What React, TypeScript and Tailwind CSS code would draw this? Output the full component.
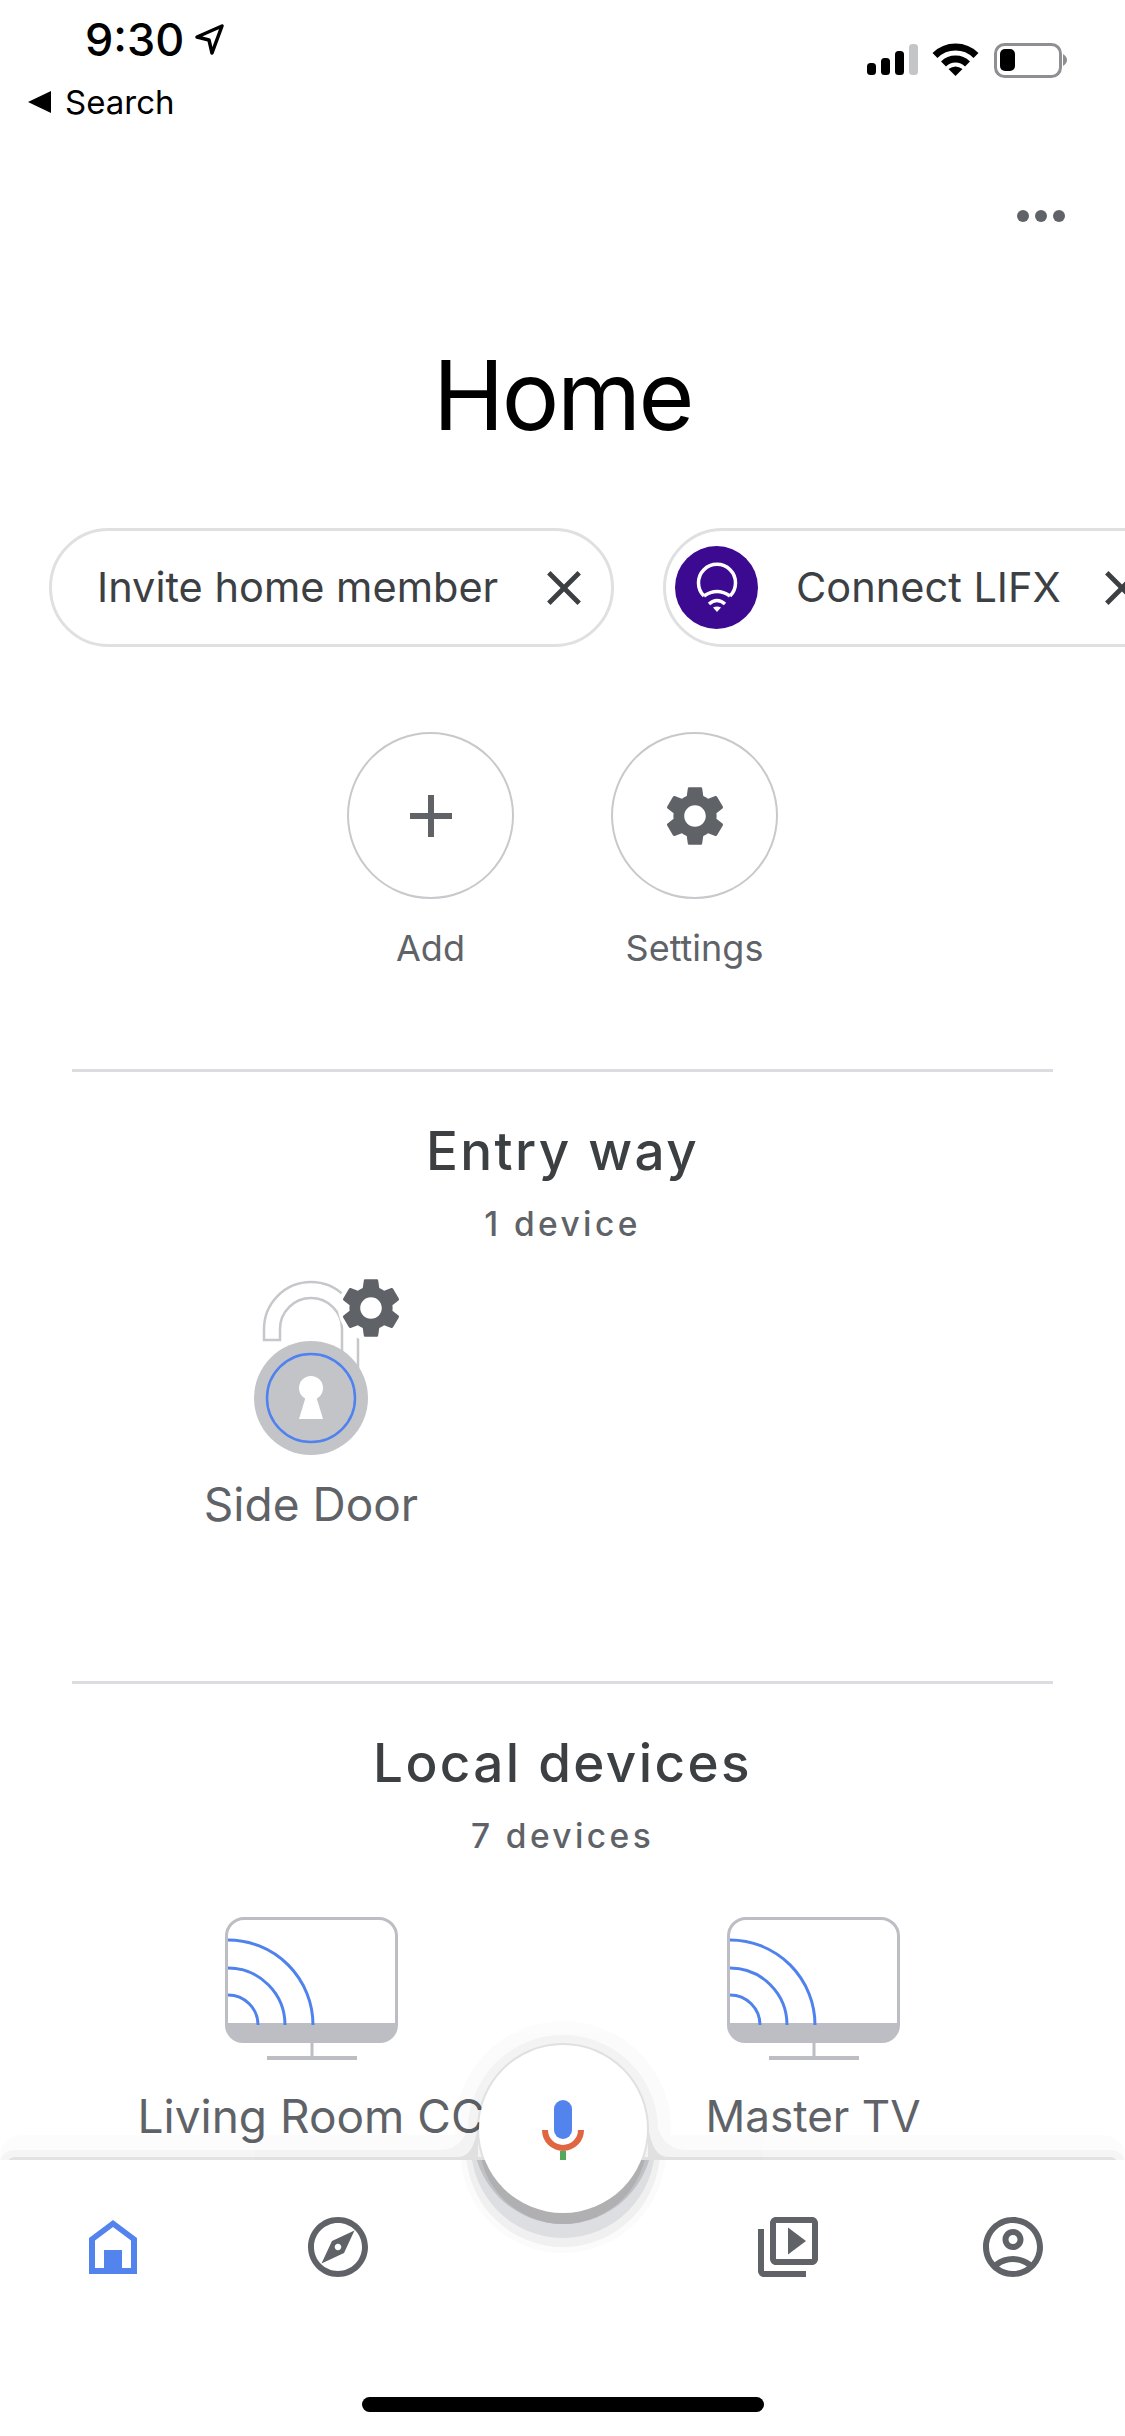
import React from "react";
import { MdAdd, MdClose, MdOutlineExplore, MdOutlineVideoLibrary, MdOutlineAccountCircle } from "react-icons/md";

const GEAR =
  "M19.14 12.94c.04-.3.06-.61.06-.94 0-.32-.02-.64-.07-.94l2.03-1.58c.18-.14.23-.41.12-.61l-1.92-3.32c-.12-.22-.37-.29-.59-.22l-2.39.96c-.5-.38-1.03-.7-1.62-.94l-.36-2.54c-.04-.24-.24-.41-.48-.41h-3.84c-.24 0-.43.17-.47.41l-.36 2.54c-.59.24-1.13.57-1.62.94l-2.39-.96c-.22-.08-.47 0-.59.22L2.74 8.87c-.12.21-.08.47.12.61l2.03 1.58c-.05.3-.09.63-.09.94s.02.64.07.94l-2.03 1.58c-.18.14-.23.41-.12.61l1.92 3.32c.12.22.37.29.59.22l2.39-.96c.5.38 1.03.7 1.62.94l.36 2.54c.05.24.24.41.48.41h3.84c.24 0 .44-.17.47-.41l.36-2.54c.59-.24 1.13-.56 1.62-.94l2.39.96c.22.08.47 0 .59-.22l1.92-3.32c.12-.22.07-.47-.12-.61l-2.01-1.58zM12 15.6c-1.98 0-3.6-1.62-3.6-3.6s1.62-3.6 3.6-3.6 3.6 1.62 3.6 3.6-1.62 3.6-3.6 3.6z";

function StatusIcons() {
  return (
    <svg width="202" height="36" viewBox="0 0 202 36" className="mt-[43px] mr-[56px]">
      <rect x="0" y="20" width="9" height="12" rx="3.5" fill="#000" />
      <rect x="14" y="15" width="9" height="17" rx="3.5" fill="#000" />
      <rect x="28" y="8" width="9" height="24" rx="3.5" fill="#000" />
      <rect x="42" y="1" width="9" height="31" rx="3.5" fill="#c4c5c9" />
      <path d="M68 12.5A29 29 0 0 1 109 12.5" fill="none" stroke="#000" strokeWidth="7" />
      <path d="M76.5 21A17 17 0 0 1 100.500 21" fill="none" stroke="#000" strokeWidth="7" />
      <path d="M88.5 33L81.500 26Q88.500 21 95.500 26Z" fill="#000" />
      <rect x="128.500" y="1.500" width="65" height="32" rx="9" fill="none" stroke="#8e8e93" strokeWidth="3" />
      <rect x="133" y="6" width="15" height="22" rx="5" fill="#000" />
      <path d="M196 11C199 13 200 15 200 17C200 19 199 21 196 23Z" fill="#8e8e93" />
    </svg>
  );
}

function Chip({ children, className }: { children: React.ReactNode; className: string }) {
  return (
    <div className={`h-[119px] shrink-0 rounded-full border-[3px] border-[#dfe0e2] flex items-center bg-white ${className}`}>
      {children}
    </div>
  );
}

function LifxLogo() {
  return (
    <svg width="83" height="83" viewBox="0 0 83 83" className="shrink-0">
      <circle cx="41.500" cy="41.500" r="41.500" fill="#3c0a91" />
      <g fill="none" stroke="#fff" strokeWidth="3.500">
        <path d="M29 50A18.500 18.500 0 1 1 55 50" />
        <path d="M29 50Q42 41 55 50" />
        <path d="M34 58Q42 51 50 58" />
      </g>
      <path d="M38 61.500Q42 59.500 46 61.500L42 66Z" fill="#fff" />
    </svg>
  );
}

function RoundAction({ label, children }: { label: string; children: React.ReactNode }) {
  return (
    <div className="w-[167px] flex flex-col items-center">
      <div className="w-[167px] h-[167px] rounded-full border-2 border-[#c8c9cc] flex items-center justify-center text-[#5f6368]">
        {children}
      </div>
      <div className="mt-[27px] h-[44px] leading-[44px] text-[36px] text-[#5f6368] whitespace-nowrap">{label}</div>
    </div>
  );
}

function SectionHeading({ title, sub, subClass }: { title: string; sub: string; subClass: string }) {
  return (
    <>
      <div className="h-[60px] leading-[60px] text-center text-[53px] font-medium tracking-[2.4px] text-[#3c4043]">{title}</div>
      <div className={`h-[40px] leading-[40px] text-center text-[33.5px] font-medium tracking-[3.4px] text-[#5f6368] ${subClass}`}>{sub}</div>
    </>
  );
}

function LockIcon() {
  return (
    <svg width="180" height="180" viewBox="0 0 180 180" className="block">
      <path d="M43 62V51A47 47 0 0 1 137 51V110H121V51A31 31 0 0 0 59 51V62Z" fill="none" stroke="#c6c7cb" strokeWidth="2.500" />
      <circle cx="150" cy="30" r="33" fill="#fff" />
      <svg x="114" y="-6" width="72" height="72" viewBox="0 0 24 24">
        <path d={GEAR} fill="#5f6368" />
      </svg>
      <circle cx="90" cy="120" r="57" fill="#c3c4c8" />
      <circle cx="90" cy="120" r="44" fill="none" stroke="#4f82f0" strokeWidth="2.500" />
      <circle cx="90" cy="110" r="12" fill="#fff" />
      <path d="M85 118H95L102 141H78Z" fill="#fff" />
    </svg>
  );
}

function TvIcon() {
  return (
    <svg width="173" height="145" viewBox="0 0 173 145" className="block">
      <path d="M0 106H173V108A18 18 0 0 1 155 126H18A18 18 0 0 1 0 108Z" fill="#bdbec3" />
      <path d="M1.500 108V19A17.500 17.500 0 0 1 19 1.500H154A17.500 17.500 0 0 1 171.500 19V108" fill="none" stroke="#bdbec3" strokeWidth="3" />
      <g fill="none" stroke="#4f82ec" strokeWidth="3">
        <path d="M3 23A85 85 0 0 1 88 108" />
        <path d="M3 51A57 57 0 0 1 60 108" />
        <path d="M3 78A30 30 0 0 1 33 108" />
      </g>
      <rect x="85.500" y="126" width="3" height="14" fill="#bdbec3" />
      <rect x="42" y="139" width="90" height="4" fill="#bdbec3" />
    </svg>
  );
}

function Device({ label, labelClass, children }: { label: string; labelClass: string; children: React.ReactNode }) {
  return (
    <div className="flex flex-col items-center">
      {children}
      <div className={`h-[56px] leading-[56px] text-[#5f6368] whitespace-nowrap ${labelClass}`}>{label}</div>
    </div>
  );
}

function BarShadow() {
  return (
    <svg width="1125" height="250" viewBox="0 2020 1125 250" className="absolute left-0 top-[2020px] pointer-events-none">
      <defs>
        <clipPath id="belowBar">
          <rect x="0" y="2160" width="1125" height="110" />
        </clipPath>
      </defs>
      <g opacity="0.012">
        <rect x="0" y="2135" width="1125" height="40" rx="22" />
        <circle cx="563" cy="2129" r="108" />
      </g>
      <g opacity="0.028">
        <rect x="0" y="2150" width="1125" height="25" rx="14" />
        <circle cx="563" cy="2130" r="95" />
        <path d="M440 2150Q468 2150 472 2110V2160Z" />
        <path d="M686 2150Q658 2150 654 2110V2160Z" />
      </g>
      <g opacity="0.075">
        <rect x="8" y="2157" width="1109" height="14" rx="6" />
        <circle cx="563" cy="2129" r="86" />
        <path d="M458 2157Q474 2157 478 2125V2160Z" />
        <path d="M668 2157Q652 2157 648 2125V2160Z" />
      </g>
      <rect x="0" y="2160" width="1125" height="110" fill="#fff" />
      <g clipPath="url(#belowBar)">
        <circle cx="563" cy="2150" r="103" fill="#fbfbfb" />
        <circle cx="563" cy="2150" r="97" fill="#f0f0f1" />
        <circle cx="563" cy="2146" r="92" fill="#dddee1" />
        <circle cx="563" cy="2134" r="90" fill="#c0c1c5" />
        <circle cx="563" cy="2140" r="84" fill="#b0b0b2" />
      </g>
    </svg>
  );
}

function HomeIcon() {
  return (
    <svg width="48" height="54" viewBox="0 0 48 54">
      <path fillRule="evenodd" d="M24 0L48 18V54H0V18ZM24 7L6 20.500V48H15V30H33V48H42V20.500Z" fill="#5383ec" />
    </svg>
  );
}

function MicIcon() {
  return (
    <svg width="168" height="168" viewBox="0 0 168 168">
      <rect x="75" y="55" width="18" height="39" rx="9" fill="#5383ec" />
      <path d="M66 85A18 18 0 0 0 102 85" fill="none" stroke="#df6640" strokeWidth="6" />
      <rect x="81" y="106" width="6" height="9" fill="#54a85c" />
    </svg>
  );
}

export default function App() {
  return (
    <div className="relative w-[1125px] h-[2436px] overflow-hidden bg-white font-['Inter','Liberation_Sans',sans-serif]">
      <header className="h-[128px] flex justify-between">
        <div className="pl-[28px]">
          <div className="flex items-center pl-[57px] pt-[14px] h-[66px]">
            <span className="text-[45px] font-medium leading-[52px] text-black">9:30</span>
            <svg width="32" height="34" viewBox="0 0 32 34" className="ml-[10px]">
              <path d="M28 3L3 14L15 17L18 30Z" fill="none" stroke="#000" strokeWidth="3.500" strokeLinejoin="round" />
            </svg>
          </div>
          <div className="flex items-center h-[40px] mt-[16px]">
            <svg width="24" height="24" viewBox="0 0 24 24">
              <path d="M23 1V23L0 12Z" fill="#000" />
            </svg>
            <span className="ml-[13px] text-[33px] leading-[40px] text-black">Search</span>
          </div>
        </div>
        <StatusIcons />
      </header>

      <div className="mt-[82px] h-[12px] flex justify-end gap-[6px] pr-[60px]">
        <span className="w-[12px] h-[12px] rounded-full bg-[#5f6368]" />
        <span className="w-[12px] h-[12px] rounded-full bg-[#5f6368]" />
        <span className="w-[12px] h-[12px] rounded-full bg-[#5f6368]" />
      </div>

      <h1 className="mt-[118px] h-[110px] leading-[110px] text-center text-[96px] font-normal tracking-[-2.5px] text-black">Home</h1>

      <div className="mt-[78px] flex gap-[49px] pl-[49px] overflow-hidden text-[41.5px] text-[#3c4043] whitespace-nowrap">
        <Chip className="w-[565px] pl-[45px]">
          <span>Invite home member</span>
          <MdClose size={58} className="ml-auto mr-[18px]" />
        </Chip>
        <Chip className="w-[520px] pl-[9px]">
          <LifxLogo />
          <span className="ml-[38px]">Connect LIFX</span>
          <MdClose size={58} className="ml-[32px]" />
        </Chip>
      </div>

      <div className="mt-[85px] flex justify-center gap-[97px]">
        <RoundAction label="Add">
          <MdAdd size={72} />
        </RoundAction>
        <RoundAction label="Settings">
          <svg width="72" height="72" viewBox="0 0 24 24">
            <path d={GEAR} fill="#5f6368" />
          </svg>
        </RoundAction>
      </div>

      <div className="mt-[99px] mx-[72px] h-[3px] bg-[#dadce0]" />

      <section className="mt-[49px]">
        <SectionHeading title="Entry way" sub="1 device" subClass="mt-[23px]" />
        <div className="mt-[34px] pl-[60px] grid grid-cols-[502px_502px]">
          <Device label="Side Door" labelClass="text-[46px]">
            <LockIcon />
            <div className="h-[18px]" />
          </Device>
        </div>
      </section>

      <div className="mt-[149px] mx-[72px] h-[3px] bg-[#dadce0]" />

      <section className="mt-[49px]">
        <SectionHeading title="Local devices" sub="7 devices" subClass="mt-[23px]" />
        <div className="mt-[61px] pl-[60px] grid grid-cols-[502px_502px]">
          <Device label="Living Room CC" labelClass="text-[46px]">
            <TvIcon />
            <div className="h-[26px]" />
          </Device>
          <Device label="Master TV" labelClass="text-[44px]">
            <TvIcon />
            <div className="h-[26px]" />
          </Device>
        </div>
      </section>

      <BarShadow />

      <nav className="absolute inset-x-0 bottom-0 h-[276px] grid grid-cols-5 text-[#5f6368]">
        <div className="flex justify-center pt-[60px]"><HomeIcon /></div>
        <div className="flex justify-center pt-[51px]"><MdOutlineExplore size={72} /></div>
        <div className="flex justify-center">
          <div className="-mt-[115px] w-[168px] h-[168px] rounded-full bg-white"><MicIcon /></div>
        </div>
        <div className="flex justify-center pt-[51px]"><MdOutlineVideoLibrary size={72} /></div>
        <div className="flex justify-center pt-[51px]"><MdOutlineAccountCircle size={72} /></div>
      </nav>

      <div className="absolute bottom-[24px] left-[362px] w-[402px] h-[15px] rounded-full bg-black" />
    </div>
  );
}
